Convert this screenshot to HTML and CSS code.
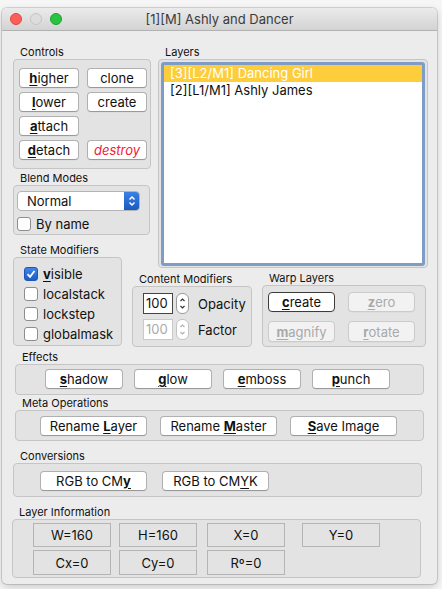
FILE: index.html
```html
<!DOCTYPE html>
<html>
<head>
<meta charset="utf-8">
<link rel="stylesheet" href="styles.css">
</head>
<body>
<div class="window">
  <div class="titlebar">
    <div class="lights">
      <span class="light red"></span>
      <span class="light gray"></span>
      <span class="light green"></span>
    </div>
    <div class="title">[1][M] Ashly and Dancer</div>
    <div></div>
  </div>
  <div class="content">
    <div class="top-grid">
      <div class="leftcol">
        <div class="group">
          <div class="glabel">Controls</div>
          <div class="box controls-box">
            <button class="btn"><u class="m">h</u>igher</button>
            <button class="btn">clone</button>
            <button class="btn"><u class="m">l</u>ower</button>
            <button class="btn">create</button>
            <button class="btn"><u class="m">a</u>ttach</button>
            <span></span>
            <button class="btn"><u class="m">d</u>etach</button>
            <button class="btn destroy">destroy</button>
          </div>
        </div>
        <div class="group blend-group">
          <div class="glabel">Blend Modes</div>
          <div class="box blend-box">
            <div class="select">
              <span class="select-text">Normal</span>
              <span class="select-arrow">
                <svg width="16" height="20" viewBox="0 0 16 20"><path d="M5.5 8.5 L8 6 L10.5 8.5" fill="none" stroke="#fff" stroke-width="1.5"/><path d="M5.5 11.5 L8 14 L10.5 11.5" fill="none" stroke="#fff" stroke-width="1.5"/></svg>
              </span>
            </div>
            <label class="check-row byname"><span class="cb"></span><span>By name</span></label>
          </div>
        </div>
      </div>

      <div class="group layers-group">
        <div class="glabel">Layers</div>
        <div class="box layers-box">
          <div class="listbox">
            <div class="row selected">[3][L2/M1] Dancing Girl</div>
            <div class="row">[2][L1/M1] Ashly James</div>
          </div>
        </div>
      </div>

      <div class="group state-group">
        <div class="glabel">State Modifiers</div>
        <div class="box state-box">
          <label class="check-row"><span class="cb checked"><svg width="14" height="14" viewBox="0 0 14 14"><path d="M3.5 7.2 L6 9.8 L10.5 4" fill="none" stroke="#fff" stroke-width="1.8"/></svg></span><span><u class="m">v</u>isible</span></label>
          <label class="check-row"><span class="cb"></span><span>localstack</span></label>
          <label class="check-row"><span class="cb"></span><span>lockstep</span></label>
          <label class="check-row"><span class="cb"></span><span>globalmask</span></label>
        </div>
      </div>

      <div class="group content-group">
        <div class="glabel">Content Modifiers</div>
        <div class="box content-box">
          <div class="cm-row">
            <span class="field">100</span>
            <span class="stepper"><svg width="13" height="21" viewBox="0 0 13 21"><path d="M4.5 8 L6.5 6 L8.5 8" fill="none" stroke="#333" stroke-width="1.2"/><path d="M4.5 13 L6.5 15 L8.5 13" fill="none" stroke="#333" stroke-width="1.2"/></svg></span>
            <span class="cm-label">Opacity</span>
          </div>
          <div class="cm-row disabled">
            <span class="field">100</span>
            <span class="stepper"><svg width="13" height="21" viewBox="0 0 13 21"><path d="M4.5 8 L6.5 6 L8.5 8" fill="none" stroke="#b0b0b0" stroke-width="1.2"/><path d="M4.5 13 L6.5 15 L8.5 13" fill="none" stroke="#b0b0b0" stroke-width="1.2"/></svg></span>
            <span class="cm-label">Factor</span>
          </div>
        </div>
      </div>

      <div class="group warp-group">
        <div class="glabel">Warp Layers</div>
        <div class="box warp-box">
          <button class="btn focus"><u class="m">c</u>reate</button>
          <button class="btn off"><u class="m">z</u>ero</button>
          <button class="btn off"><u class="m">m</u>agnify</button>
          <button class="btn off"><u class="m">r</u>otate</button>
        </div>
      </div>
    </div>

    <div class="group effects-group">
      <div class="glabel">Effects</div>
      <div class="box effects-box">
        <button class="btn"><u class="m">s</u>hadow</button>
        <button class="btn"><u class="m">g</u>low</button>
        <button class="btn"><u class="m">e</u>mboss</button>
        <button class="btn"><u class="m">p</u>unch</button>
      </div>
    </div>

    <div class="group meta-group">
      <div class="glabel">Meta Operations</div>
      <div class="box meta-box">
        <button class="btn w107">Rename <u class="m">L</u>ayer</button>
        <button class="btn w117">Rename <u class="m">M</u>aster</button>
        <button class="btn w107"><u class="m">S</u>ave Image</button>
      </div>
    </div>

    <div class="group conv-group">
      <div class="glabel">Conversions</div>
      <div class="box conv-box">
        <button class="btn w107">RGB to CM<u class="m">y</u></button>
        <button class="btn w107">RGB to CM<u class="u">Y</u>K</button>
      </div>
    </div>

    <div class="group info-group">
      <div class="glabel">Layer Information</div>
      <div class="box info-box">
        <div class="cell">W=160</div>
        <div class="cell">H=160</div>
        <div class="cell">X=0</div>
        <div class="cell">Y=0</div>
        <div class="cell">Cx=0</div>
        <div class="cell">Cy=0</div>
        <div class="cell">Rº=0</div>
      </div>
    </div>
  </div>
</div>
</body>
</html>
```
FILE: styles.css
```css
* { box-sizing: border-box; }
html, body { margin: 0; padding: 0; }
body {
  background: #f6f6f6;
  font-family: Inter, "Liberation Sans", sans-serif;
  color: #111;
  width: 442px;
  height: 589px;
  overflow: hidden;
}
.window {
  margin: 8px 0 0 2px;
  width: 435px;
  height: 576px;
  background: #ececec;
  border-radius: 5px;
  overflow: hidden;
  box-shadow: 0 0 0 1px rgba(0,0,0,0.13), 0 3px 8px rgba(0,0,0,0.18);
}
.titlebar {
  height: 23px;
  display: grid;
  grid-template-columns: 1fr auto 1fr;
  align-items: center;
  background: linear-gradient(#ebebeb, #d3d3d3);
  border-bottom: 1px solid #b1b1b1;
}
.lights { display: flex; gap: 8px; padding-left: 8px; }
.light { width: 12px; height: 12px; border-radius: 50%; display: block; }
.light.red { background: #fc5f57; border: 1px solid #df4744; }
.light.gray { background: #dddddd; border: 1px solid #c4c4c4; }
.light.green { background: #2ac33f; border: 1px solid #1fa22f; }
.title { font-size: 13px; color: #3b3b3b; }

.content { padding: 14px 0 0 11px; }

.top-grid {
  display: grid;
  grid-template-columns: 109px 130px 176px;
  grid-template-rows: 196px 30px 76px;
}
.glabel {
  font-size: 11px;
  line-height: 14px;
  height: 14px;
  padding-left: 7px;
  color: #111;
}
.box {
  background: #e3e3e3;
  border: 1px solid #c5c5c5;
  border-radius: 4px;
}
.btn {
  font-family: inherit;
  font-size: 13px;
  color: #111;
  background: #fff;
  border: 1px solid #b0b0b0;
  border-bottom-color: #999;
  border-radius: 4px;
  height: 20px;
  padding: 0;
  margin: 0;
  line-height: 18px;
  text-align: center;
  box-shadow: 0 0.5px 0 rgba(0,0,0,0.05);
}
u.m { font-weight: 700; text-decoration: underline; text-underline-offset: 2px; }
u.u { text-decoration: underline; text-underline-offset: 2px; }
.btn.destroy { color: #f2203a; font-style: italic; }
.btn.focus { border-color: #3c3c3c; }
.btn.off { color: #a9a9a9; border-color: #cbcbcb; background: #f2f2f2; }

.leftcol { grid-column: 1 / 3; grid-row: 1; width: 138px; }
.controls-box {
  height: 110px;
  padding: 8px 0 0 5px;
  display: grid;
  grid-template-columns: 60px 60px;
  grid-auto-rows: 20px;
  column-gap: 8px;
  row-gap: 4px;
}
.blend-group { margin-top: 2px; }
.blend-box { height: 50px; width: 137px; padding: 5px 0 0 3px; }
.select {
  width: 123px;
  height: 20px;
  display: flex;
  background: #fff;
  border: 1px solid #b4b4b4;
  border-radius: 4px;
  overflow: hidden;
}
.select-text { flex: 1; font-size: 13px; line-height: 18px; padding-left: 9px; }
.select-arrow {
  width: 16px;
  height: 20px;
  margin: -1px -1px 0 0;
  background: linear-gradient(#3c84e6, #1658c0);
  display: block;
}
.select-arrow svg { display: block; }
.check-row {
  display: flex;
  align-items: center;
  gap: 5px;
  font-size: 13px;
  height: 20px;
}
.cb {
  width: 14px;
  height: 14px;
  background: #fff;
  border: 1px solid #8d8d8d;
  border-radius: 3px;
  display: block;
  flex: none;
}
.cb.checked { background: linear-gradient(#3f86e8, #1b5ec4); border-color: #1b58b5; }
.cb.checked svg { display: block; margin: -1px; }
.byname { margin: 3px 0 0 0; }

.layers-group { grid-column: 2 / 4; grid-row: 1 / 3; margin-left: 36px; }
.layers-box { height: 209px; padding: 2px 2px 1px 2px; }
.listbox {
  height: 100%;
  background: #fff;
  border: 3px solid #7f9cc7;
  border-radius: 3px;
  padding-top: 0;
}
.row {
  font-size: 13px;
  line-height: 17px;
  height: 17px;
  padding-left: 6px;
  color: #111;
}
.row.selected { background: #fdcd3c; color: #fff; }

.state-group { grid-column: 1; grid-row: 2 / 4; margin-top: 2px; }
.state-box { height: 89px; padding: 6px 0 0 10px; }

.content-group { grid-column: 2; grid-row: 3; margin: 1px 0 0 10px; width: 120px; }
.content-box { height: 61px; padding: 6px 0 0 10px; display: flex; flex-direction: column; gap: 5px; }
.cm-row { display: flex; align-items: center; height: 21px; }
.field {
  width: 30px;
  height: 21px;
  background: #fff;
  border: 1px solid #444;
  font-size: 13px;
  line-height: 19px;
  padding-left: 2px;
}
.stepper {
  width: 13px;
  height: 21px;
  margin-left: 3px;
  background: #fff;
  border: 1px solid #9a9a9a;
  border-radius: 6px;
  display: block;
}
.stepper svg { display: block; margin: -1px; }
.cm-label { font-size: 13px; margin-left: 9px; }
.cm-row.disabled .field { color: #aaa; border-color: #c9c9c9; }
.cm-row.disabled .stepper { border-color: #c4c4c4; }

.warp-group { grid-column: 3; grid-row: 3; margin-left: 10px; width: 164px; }
.warp-box {
  height: 62px;
  padding: 6px 0 0 5px;
  display: grid;
  grid-template-columns: 67px 67px;
  grid-template-rows: 20px 21px;
  column-gap: 13px;
  row-gap: 9px;
}
.warp-box .btn { height: auto; }

.effects-group { margin: 3px 0 0 2px; width: 409px; }
.effects-box { height: 31px; padding: 4px 0 0 29px; display: flex; gap: 11px; }
.effects-box .btn { width: 78px; }

.meta-group { margin: 1px 0 0 2px; width: 409px; }
.meta-box { height: 31px; padding: 5px 0 0 24px; display: flex; gap: 13px; }
.w107 { width: 107px; }
.w117 { width: 117px; }

.conv-group { margin-top: 8px; width: 409px; }
.conv-box { height: 34px; padding: 7px 0 0 26px; display: flex; gap: 15px; }

.info-group { margin: 8px 0 0 -1px; width: 409px; }
.info-box {
  height: 59px;
  padding: 3px 0 0 20px;
  display: grid;
  grid-template-columns: 86px 88px 95px 78px;
  grid-template-rows: 24px 25px;
  row-gap: 3px;
}
.cell {
  width: 78px;
  border: 1px solid #b5b5b5;
  font-size: 13px;
  display: flex;
  align-items: center;
  justify-content: center;
  color: #111;
}
```
